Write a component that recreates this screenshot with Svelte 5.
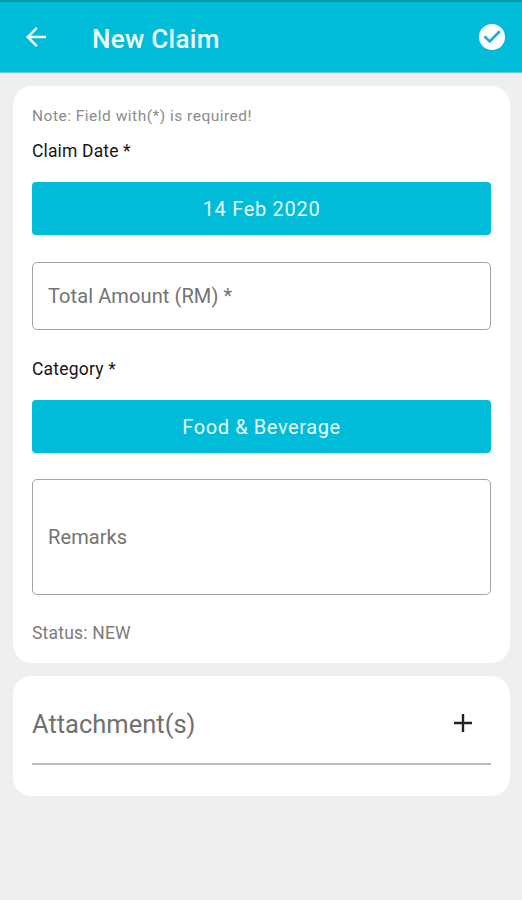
<script>
  const claim = { date: '14 Feb 2020', category: 'Food & Beverage', status: 'NEW' };
</script>

<div class="screen">
  <header>
    <button class="icon back" aria-label="Back">
      <svg width="30" height="30" viewBox="0 0 24 24" fill="#f4feff"><path d="M20 11H7.83l5.59-5.59L12 4l-8 8 8 8 1.41-1.41L7.83 13H20z" /></svg>
    </button>
    <h1><span>New Claim</span></h1>
    <button class="icon" aria-label="Submit">
      <svg width="26" height="26" viewBox="0 0 26 26" fill="none"><circle cx="13" cy="13" r="13" fill="#fff" /><path d="M5.5 12.4l5.2 5L20.8 7.3" stroke="#18b0c8" stroke-width="2.7" /></svg>
    </button>
  </header>

  <main>
    <section class="card form">
      <p class="note"><span>Note: Field with(*) is required!</span></p>
      <p class="label date-label"><span>Claim Date *</span></p>
      <button class="pick"><span class="date">{claim.date}</span></button>
      <div class="field amount"><span>Total Amount (RM) *</span></div>
      <p class="label cat-label"><span>Category *</span></p>
      <button class="pick"><span class="category">{claim.category}</span></button>
      <div class="field remarks"><span>Remarks</span></div>
      <p class="status"><span>Status: {claim.status}</span></p>
    </section>

    <section class="card attachments">
      <div class="row">
        <h2><span>Attachment(s)</span></h2>
        <button class="icon" aria-label="Add attachment">
          <svg width="18" height="18" viewBox="0 0 18 18" stroke="#222" stroke-width="2.4"><path d="M9 0v18M0 9h18" /></svg>
        </button>
      </div>
    </section>
  </main>
</div>

<style>
  :global(body) { background: #efefef; }
  .screen {
    box-sizing: border-box;
    width: 522px;
    height: 900px;
    background: #efefef;
    font-family: Roboto, sans-serif;
    overflow: hidden;
  }
  h1, h2, p { margin: 0; font-weight: 400; white-space: nowrap; }
  button { font: inherit; border: 0; padding: 0; margin: 0; display: block; }
  svg { display: block; }
  .icon { background: none; }
  header {
    box-sizing: border-box;
    height: 73px;
    border-top: 2px solid #0499b1;
    border-bottom: 1px solid #65cfdf;
    padding: 0 17px 0 21px;
    display: flex;
    align-items: center;
    background: #00bcd9;
  }
  h1 {
    flex: 1;
    margin-left: 41px;
    padding-top: 3px;
    font-size: 26px;
    font-weight: 500;
    line-height: 30px;
    letter-spacing: 0.3px;
    color: #effdff;
  }
  main { padding: 13px 12px 0 13px; display: flex; flex-direction: column; gap: 13px; }
  .card { box-sizing: border-box; background: #fff; border-radius: 19px; padding: 0 19px; }
  .form { height: 577px; padding-top: 18px; }
  .note { font-size: 15.5px; line-height: 24px; letter-spacing: 0.5px; color: #8b8b8b; }
  .label { font-size: 17.5px; line-height: 24px; color: #151515; }
  .date-label { margin-top: 11px; letter-spacing: 0.15px; }
  .cat-label { margin-top: 27px; letter-spacing: 0.2px; }
  .pick {
    width: 100%;
    height: 53px;
    margin-top: 19px;
    padding-top: 1px;
    border-radius: 4px;
    background: #00bcd9;
    color: #e5fbff;
    font-size: 20px;
    text-align: center;
  }
  .date { letter-spacing: 0.7px; }
  .category { letter-spacing: 0.6px; }
  .field {
    box-sizing: border-box;
    margin-top: 27px;
    border: 1.5px solid #a3a3a3;
    border-radius: 5px;
    padding: 0 15px;
    display: flex;
    align-items: center;
    font-size: 20px;
    letter-spacing: 0.1px;
    color: #737373;
  }
  .amount { height: 68px; }
  .remarks { height: 116px; margin-top: 26px; }
  .status { margin-top: 26px; font-size: 17.5px; line-height: 24px; letter-spacing: 0.2px; color: #7b7b7b; }
  .attachments { height: 120px; }
  .row {
    display: flex;
    justify-content: space-between;
    align-items: center;
    height: 87px;
    padding-right: 19px;
    border-bottom: 2px solid #bcbcbc;
  }
  .row .icon { padding-top: 6px; }
  h2 { padding-top: 8px; font-size: 25.5px; line-height: 32px; color: #707070; }
</style>
